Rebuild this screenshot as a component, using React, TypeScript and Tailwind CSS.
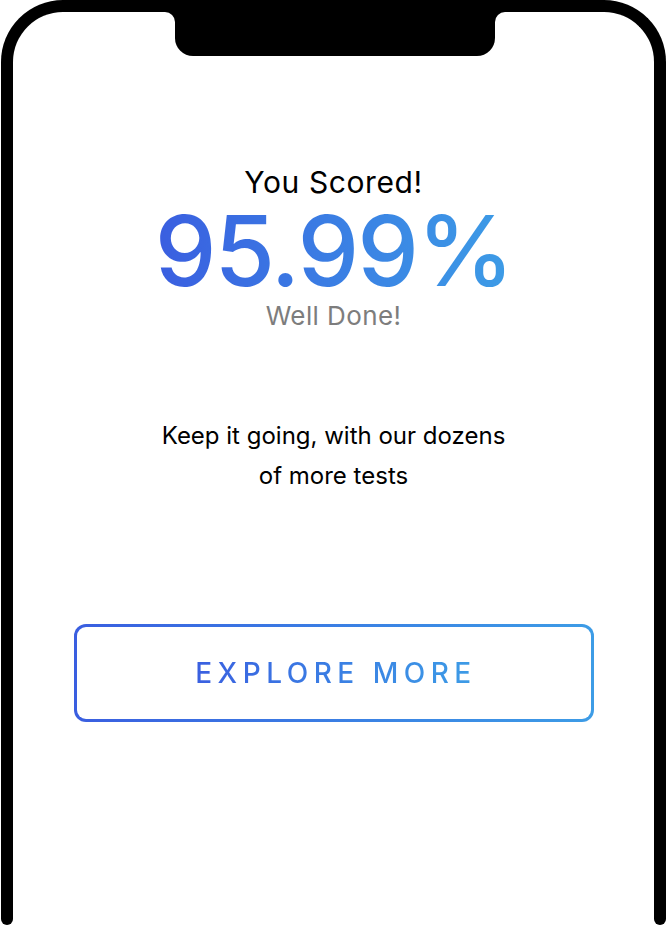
function Fillet({ side }: { side: 'left' | 'right' }) {
  return (
    <div className="size-[10px] bg-black">
      <div
        className={
          side === 'left'
            ? 'size-full rounded-tr-[10px] bg-white'
            : 'size-full rounded-tl-[10px] bg-white'
        }
      />
    </div>
  );
}

export default function App() {
  return (
    <div className="flex h-[925px] w-[667px] flex-col bg-white px-px font-['Inter',sans-serif]">
      {/* phone frame */}
      <div className="flex h-[919px] flex-col rounded-t-[62px] border-x-[12px] border-t-[12px] border-black">
        {/* notch */}
        <div className="flex items-start justify-center pl-[3px]">
          <Fillet side="left" />
          <div className="h-[44px] w-[320px] rounded-b-[18px] bg-black" />
          <Fillet side="right" />
        </div>

        <div className="flex flex-col items-center pt-[108px]">
          <h2 className="text-[30px] leading-[36px] font-normal tracking-[0.6px] text-black">
            You Scored!
          </h2>
          <p className="mt-[2px] bg-gradient-to-r from-[#3a5ee0] to-[#3d9ce6] bg-clip-text text-[98px] leading-[98px] font-medium tracking-[-2px] text-transparent">
            95.99%
          </p>
          <p className="mt-[1px] text-[26px] leading-[30px] tracking-[0.4px] text-[#7d7d7d]">
            Well Done!
          </p>

          <p className="mt-[85px] text-center text-[24px] leading-[40px] text-black">
            Keep it going, with our dozens
            <br />
            of more tests
          </p>

          <div className="mt-[128px] w-[520px] rounded-[12px] bg-gradient-to-r from-[#3a5ee0] to-[#3d9ce6] p-[3px]">
            <button className="flex h-[92px] w-full items-center justify-center rounded-[9px] bg-white">
              <span className="bg-gradient-to-r from-[#3a5ee0] to-[#3d9ce6] bg-clip-text pl-[5px] text-[28px] font-medium tracking-[5.5px] text-transparent">
                EXPLORE MORE
              </span>
            </button>
          </div>
        </div>
      </div>
      {/* rounded ends of the frame sides */}
      <div className="flex justify-between">
        <div className="h-[6px] w-[12px] rounded-b-[6px] bg-black" />
        <div className="h-[6px] w-[12px] rounded-b-[6px] bg-black" />
      </div>
    </div>
  );
}
